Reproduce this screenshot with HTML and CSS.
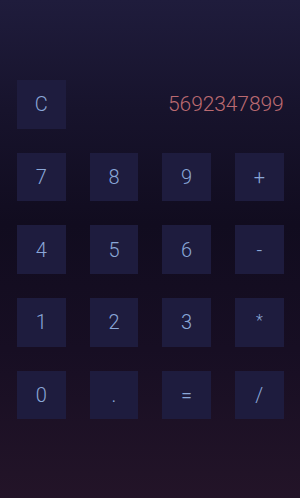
FILE: index.html
```html
<!DOCTYPE html>
<html lang="en">
<head>
    <meta charset="UTF-8">
    <meta name="viewport" content="width=device-width, initial-scale=1.0">
    <title>Calculator</title>
    <link rel="stylesheet" href="styles.css">
</head>
<body>
    <div class="calc">
        <div class="keys">
            <button class="key">C</button>
            <div class="display">5692347899</div>

            <button class="key">7</button>
            <button class="key">8</button>
            <button class="key">9</button>
            <button class="key">+</button>

            <button class="key">4</button>
            <button class="key">5</button>
            <button class="key">6</button>
            <button class="key">-</button>

            <button class="key">1</button>
            <button class="key">2</button>
            <button class="key">3</button>
            <button class="key small">*</button>

            <button class="key">0</button>
            <button class="key">.</button>
            <button class="key">=</button>
            <button class="key">/</button>
        </div>
    </div>
</body>
</html>
```

FILE: styles.css
```css
* {
    box-sizing: border-box;
    margin: 0;
    padding: 0;
}
html, body {
    height: 100%;
}
body {
    font-family: 'Roboto', 'Noto Sans', sans-serif;
    font-weight: 300;
    background: linear-gradient(180deg, #1f1c3c 0%, #17132c 22%, #110c1f 45%, #170e23 70%, #231428 100%);
    color: #8aa7d8;
}
.calc {
    padding: 80px 16px 0 17px;
}
.keys {
    display: grid;
    grid-template-columns: repeat(4, 48.5px);
    grid-auto-rows: 48.5px;
    column-gap: 24.2px;
    row-gap: 24.2px;
}
.key {
    border: none;
    background: #1e1c3e;
    color: #8aa7d8;
    font-family: inherit;
    font-weight: 300;
    font-size: 20px;
    display: flex;
    align-items: center;
    justify-content: center;
    cursor: pointer;
}
.key.small {
    font-size: 16px;
    padding-bottom: 4px;
}
.display {
    grid-column: 2 / 5;
    display: flex;
    align-items: center;
    justify-content: flex-end;
    font-size: 21px;
    color: #bb6a71;
    letter-spacing: -0.1px;
}
```
